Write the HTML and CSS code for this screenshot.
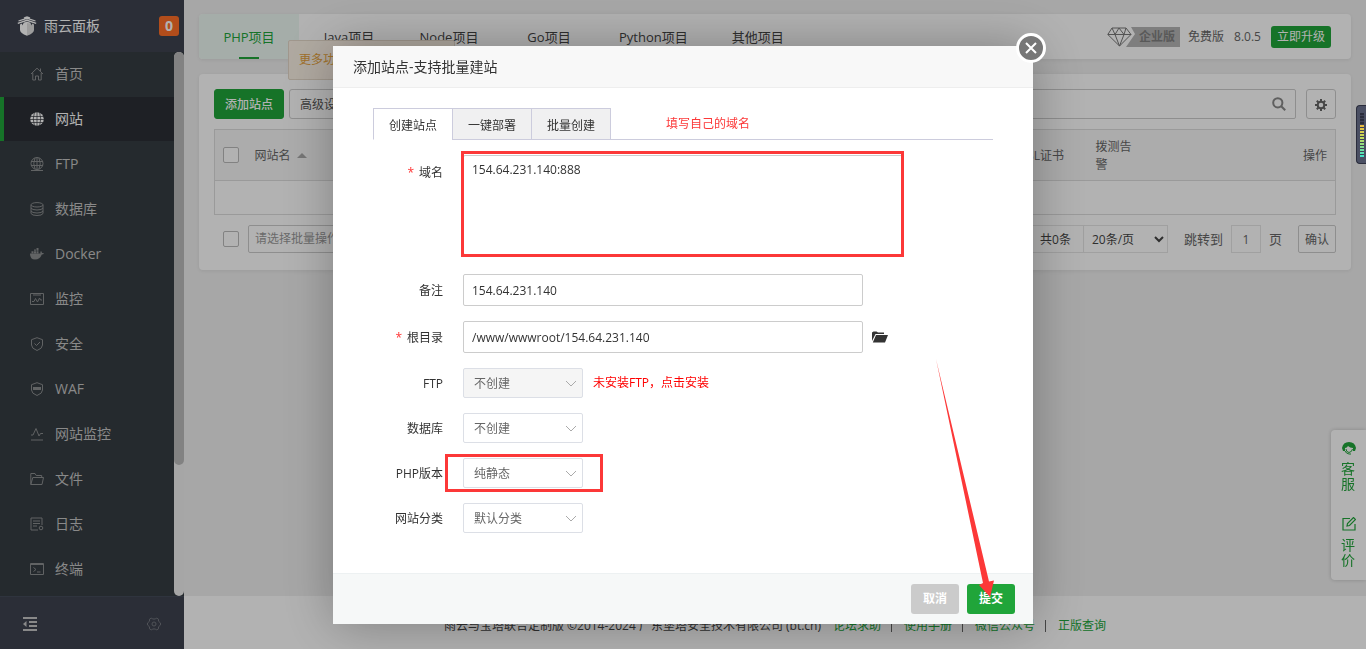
FILE: index.html
```html
<!DOCTYPE html>
<html lang="zh-CN">
<head>
<meta charset="utf-8">
<title>雨云面板</title>
<link rel="stylesheet" href="styles.css">
</head>
<body>
<div class="app">
  <aside class="sidebar">
    <header class="brand">
      <svg class="brand-logo" viewBox="0 0 20 20"><path d="M10 .8l3 1.400M10 .8L7 2.200M1.500 5L10 2.300 18.500 5M.8 7.300L10 4.300l9.200 3" fill="none" stroke="currentColor" stroke-width="1.300"/><path d="M3 8.500l2-1v2l2-3 3-.7 3 .7 2 3v-2l2 1V14q0 3-7 5.800Q3 17 3 14z" fill="currentColor"/><path d="M10 7v12.800Q17 17 17 14V8.500z" fill="#000" opacity=".12"/></svg>
      <span class="brand-name">雨云面板</span>
      <span class="brand-count">0</span>
    </header>
    <div class="menu-wrap">
      <nav class="menu">
        <a class="menu-item" href="#"><svg class="menu-icon" viewBox="0 0 14 14"><path d="M1 7l6-5.800L13 7M2.800 6v7h2.700V9h3v4h2.700V6M10.500 4V1.500"/></svg>首页</a>
        <a class="menu-item menu-item-active" href="#"><svg class="menu-icon" viewBox="0 0 14 14"><circle cx="7" cy="7" r="6.800" fill="currentColor" stroke="none"/><path class="globe-cut" d="M.5 4.500h13M0 7.500h14M.5 10.500h13M7 0v14M4.500 0q-2.500 7 0 14M9.500 0q2.500 7 0 14"/></svg>网站</a>
        <a class="menu-item" href="#"><svg class="menu-icon" viewBox="0 0 14 14"><circle cx="7" cy="6.500" r="6"/><path d="M1 4.500h12M1 8.500h12M7 .5v12M5 1q-2.500 5.500 0 11M9 1q2.500 5.500 0 11M1 13.500h12"/></svg>FTP</a>
        <a class="menu-item" href="#"><svg class="menu-icon" viewBox="0 0 14 14"><ellipse cx="7" cy="2.800" rx="6" ry="2.200"/><path d="M1 3v8.500q1 2 6 2t6-2V3M1 6q1 2 6 2t6-2M1 9q1 2 6 2t6-2"/></svg>数据库</a>
        <a class="menu-item" href="#"><svg class="menu-icon" viewBox="0 0 14 14"><path d="M0 6.500h10.500q-.5-1.500.5-2.500 1 .8 1 2 1-.3 2 .2-.5 1.300-2.200 1.300Q10 12.500 5 12.500 0 12.500 0 6.500zM1.500 4.200h2v2h-2zM4 4.200h2v2H4zM6.500 4.200h2v2h-2zM6.500 1h2v2.800h-2zM4 2.500h2v1.300H4z" fill="currentColor" stroke="none"/></svg>Docker</a>
        <a class="menu-item" href="#"><svg class="menu-icon" viewBox="0 0 14 14"><path d="M.5 1.500h13v11H.5zM3 3h8M2 9.500h2l1.500-3 2 3.500 2-4 1 2H12"/></svg>监控</a>
        <a class="menu-item" href="#"><svg class="menu-icon" viewBox="0 0 14 14"><path d="M7 .7l5.500 2V8q0 3.500-5.500 5.500Q1.500 11.500 1.500 8V2.700zM4.500 6.500L6.500 8.500l3.500-3.500"/></svg>安全</a>
        <a class="menu-item" href="#"><svg class="menu-icon" viewBox="0 0 14 14"><path d="M7 .7l5.500 2V8q0 3.500-5.500 5.500Q1.500 11.500 1.500 8V2.700z"/><path d="M3 5h8v3H3z" fill="currentColor" stroke="none"/></svg>WAF</a>
        <a class="menu-item" href="#"><svg class="menu-icon" viewBox="0 0 14 14"><path d="M1 8h2l3-6.500 3 7.500L10.500 6.500H13M1 13h12"/></svg>网站监控</a>
        <a class="menu-item" href="#"><svg class="menu-icon" viewBox="0 0 14 14"><path d="M.8 12.500V1.500H5l1.200 2h5.500v2M.8 12.500L2.800 5.500h10.700l-1.500 7z"/></svg>文件</a>
        <a class="menu-item" href="#"><svg class="menu-icon" viewBox="0 0 14 14"><path d="M12 8V1H1v12h7M3 4h7M3 6.500h7M3 9h4"/><circle cx="11" cy="11" r="1.800"/></svg>日志</a>
        <a class="menu-item" href="#"><svg class="menu-icon" viewBox="0 0 14 14"><path d="M.5 1.500h13v11H.5zM.5 2.500h13M3.500 5.500l2.500 2-2.500 2M7 10h3.500"/></svg>终端</a>
      </nav>
      <div class="menu-track"><div class="menu-thumb"></div></div>
    </div>
    <footer class="side-foot">
      <svg class="fold-icon" viewBox="0 0 14 14"><path d="M0 1h14M6 5h8M6 9h8M0 13h14"/><path d="M3.500 4v6L0 7z" fill="currentColor" stroke="none"/></svg>
      <svg class="set-icon" viewBox="0 0 14 14"><path d="M4.500 1L5.500 2h3l1-1 2 1.200v2L13.500 6v2l-2 1.800v2l-2 1.200-1-1h-3l-1 1-2-1.200v-2L.5 8V6l2-1.800v-2z"/><circle cx="7" cy="7" r="2"/></svg>
    </footer>
  </aside>

  <div class="page">
    <main class="content">
      <section class="card project-bar">
        <nav class="project-tabs">
          <a class="project-tab project-tab-active" href="#">PHP项目</a>
          <a class="project-tab" href="#">Java项目</a>
          <a class="project-tab" href="#">Node项目</a>
          <a class="project-tab" href="#">Go项目</a>
          <a class="project-tab" href="#">Python项目</a>
          <a class="project-tab" href="#">其他项目</a>
        </nav>
        <div class="version">
          <span class="edition"><svg class="gem" viewBox="0 0 28 20"><path class="gem-back" d="M24 0l4 7-9 13h9V0z"/><path d="M5 1h14l5 6.500L12.500 19 .8 7.500zM.8 7.500h23.200M5 1l3 6.500 4.500 11.500L17 7.500 19 1M8 7.500L12 1l5 6.500"/></svg><b class="edition-name">企业版</b></span>
          <span>免费版</span>
          <span>8.0.5</span>
          <button class="btn-upgrade" type="button">立即升级</button>
        </div>
        <div class="tip">更多功能</div>
      </section>

      <section class="card site-card">
        <div class="toolbar">
          <button class="btn btn-green" type="button">添加站点</button>
          <button class="btn" type="button">高级设置</button>
          <label class="search"><input class="search-input" type="text" aria-label="搜索"><svg class="search-icon" viewBox="0 0 14 14"><circle cx="5.800" cy="5.800" r="4.600"/><path d="M9.200 9.200l4 4"/></svg></label>
          <button class="btn btn-gear" type="button" aria-label="设置"><svg class="gear" viewBox="0 0 12 12"><circle cx="6" cy="6" r="3.300"/><path d="M6 0v2.500M6 9.500V12M0 6h2.500M9.500 6H12M1.800 1.800l1.700 1.700M8.500 8.500l1.700 1.700M1.800 10.200l1.700-1.700M8.500 3.500l1.700-1.700"/></svg></button>
        </div>
        <table class="sites">
          <colgroup><col class="col-check"><col><col class="col-ssl"><col class="col-alarm"><col class="col-act"></colgroup>
          <thead>
            <tr><th class="cell-check"><input class="check" type="checkbox" aria-label="全选"></th><th>网站名<i class="sort"></i></th><th>SSL证书</th><th>拨测告警</th><th class="cell-act">操作</th></tr>
          </thead>
          <tbody><tr><td colspan="5"></td></tr></tbody>
        </table>
        <div class="pager">
          <input class="check check-pager" type="checkbox" aria-label="批量选择">
          <select class="batch" aria-label="批量操作"><option>请选择批量操作</option></select>
          <span class="total">共0条</span>
          <select class="page-size" aria-label="每页条数"><option>20条/页</option></select>
          <label class="jump">跳转到<input class="jump-input" type="text" value="1">页</label>
          <button class="btn-confirm" type="button">确认</button>
        </div>
      </section>
    </main>
    <footer class="page-foot">
      <span>雨云与宝塔联合定制版 ©2014-2024 广东堡塔安全技术有限公司 (bt.cn)</span>
      <a href="#">论坛求助</a><i class="bar"></i><a href="#">使用手册</a><i class="bar"></i><a href="#">微信公众号</a><i class="bar"></i><a href="#">正版查询</a>
    </footer>
  </div>
</div>

<aside class="service">
  <a class="service-item" href="#"><svg class="service-icon" viewBox="0 0 14 14"><path d="M0 7Q1 1 7 1t7 6l-1 3h-2V7Q8 7 6 5 5 7 3 7v3H1z" fill="currentColor"/><path d="M3 10q1 2.500 4 3h2M4 8q0 3 3 3.500Q10 11 10.500 8" fill="none" stroke="currentColor"/></svg><span>客服</span></a>
  <a class="service-item" href="#"><svg class="service-icon" viewBox="0 0 14 14"><path d="M8 1.500H1v11.500h12V7M5 9l.5-2.500 6-6L13.500 2.500l-6 6z" fill="none" stroke="currentColor" stroke-width="1.200"/></svg><span>评价</span></a>
</aside>

<div class="mask">
  <form class="dialog" role="dialog" aria-labelledby="dialog-title">
    <h2 class="dialog-title" id="dialog-title">添加站点-支持批量建站</h2>
    <button class="dialog-close" type="button" aria-label="关闭"><svg viewBox="0 0 12 12"><path d="M1 1l10 10M11 1L1 11"/></svg></button>
    <div class="dialog-body">
      <div class="tabs">
        <button class="tab tab-active" type="button">创建站点</button>
        <button class="tab" type="button">一键部署</button>
        <button class="tab" type="button">批量创建</button>
        <span class="note">填写自己的域名</span>
      </div>
      <div class="row row-domain">
        <label class="label" for="domain"><i class="star">*</i>域名</label>
        <div class="field field-domain"><textarea class="text area" id="domain">154.64.231.140:888</textarea></div>
      </div>
      <div class="row">
        <label class="label" for="remark">备注</label>
        <div class="field"><input class="text" id="remark" type="text" value="154.64.231.140"></div>
      </div>
      <div class="row">
        <label class="label" for="root"><i class="star">*</i>根目录</label>
        <div class="field"><input class="text" id="root" type="text" value="/www/wwwroot/154.64.231.140"><svg class="folder" viewBox="0 0 16 12"><path d="M0 10V1.500L1.500.5h3L6 1.500h6V3H3.500zM4 4h12l-3 7.500H.8z" fill="currentColor"/></svg></div>
      </div>
      <div class="row">
        <label class="label" for="ftp">FTP</label>
        <div class="field"><span class="pick"><select class="select" id="ftp" disabled><option>不创建</option></select><svg class="chev" viewBox="0 0 12 7"><path d="M1 1l5 5 5-5"/></svg></span><a class="install" href="#">未安装FTP，点击安装</a></div>
      </div>
      <div class="row">
        <label class="label" for="db">数据库</label>
        <div class="field"><span class="pick"><select class="select" id="db"><option>不创建</option></select><svg class="chev" viewBox="0 0 12 7"><path d="M1 1l5 5 5-5"/></svg></span></div>
      </div>
      <div class="row">
        <label class="label" for="php">PHP版本</label>
        <div class="field"><span class="pick pick-marked"><select class="select" id="php"><option>纯静态</option></select><svg class="chev" viewBox="0 0 12 7"><path d="M1 1l5 5 5-5"/></svg></span></div>
      </div>
      <div class="row">
        <label class="label" for="type">网站分类</label>
        <div class="field"><span class="pick"><select class="select" id="type"><option>默认分类</option></select><svg class="chev" viewBox="0 0 12 7"><path d="M1 1l5 5 5-5"/></svg></span></div>
      </div>
    </div>
    <footer class="dialog-foot">
      <button class="act act-cancel" type="button">取消</button>
      <button class="act act-submit" type="button">提交<svg class="arrow" viewBox="0 0 60 240"><path d="M1 1L54 223.500 59 222.500 55 239 44 227 48 225z" fill="#fc3838"/></svg></button>
    </footer>
  </form>
</div>

<div class="meter"><div class="meter-scale"></div></div>
</body>
</html>
```

FILE: styles.css
```css
* { box-sizing: border-box; }
body {
  margin: 0;
  font: 12px/18px "Open Sans", "Noto Sans CJK SC", sans-serif;
  color: #666;
  background: #f0f0f0;
}
a { text-decoration: none; color: inherit; }
i { font-style: normal; }
button, input, select, textarea { font: inherit; color: inherit; margin: 0; }
svg { display: block; flex: none; }

.app { display: flex; height: 100vh; overflow: hidden; }

/* sidebar */
.sidebar { width: 184px; flex: none; display: flex; flex-direction: column; background: #363d42; color: #c4c4c4; }
.brand { height: 52px; flex: none; display: flex; align-items: center; padding: 0 5px 0 17px; background: #3e4350; color: #fff; font-size: 14px; }
.brand-logo { width: 20px; height: 20px; margin-right: 7px; }
.brand-count { margin-left: auto; width: 20px; height: 20px; border-radius: 3px; background: #ff6f27; font-weight: bold; line-height: 20px; text-align: center; }
.menu-wrap { flex: 1; min-height: 0; display: flex; }
.menu { flex: 1; overflow: hidden; }
.menu-item { display: flex; align-items: center; height: 44px; margin-bottom: 1px; padding-left: 30px; font-size: 14px; }
.menu-item-active { background: #2c2f36; color: #fff; border-left: 4px solid #20a53a; padding-left: 26px; }
.menu-icon { width: 14px; height: 14px; margin-right: 11px; fill: none; stroke: currentColor; opacity: .6; }
.menu-item-active .menu-icon { opacity: 1; }
.menu-icon .globe-cut { stroke: #2c2f36; stroke-width: .7; }
.menu-track { width: 10px; background: #eee; border-radius: 5px; }
.menu-thumb { height: 76%; border-radius: 5px; background: #bbb; }
.side-foot { height: 53px; flex: none; display: flex; align-items: center; justify-content: space-between; padding: 2px 23px 0; background: #3e4350; border-top: 1px solid #444b5a; }
.fold-icon, .set-icon { width: 14px; height: 14px; fill: none; stroke: currentColor; }
.fold-icon { stroke-width: 2; }
.set-icon { opacity: .4; }

/* page */
.page { flex: 1; min-width: 0; display: flex; flex-direction: column; }
.content { flex: 1; padding: 14px 15px; display: flex; flex-direction: column; gap: 15px; }
.card { background: #fff; border-radius: 4px; box-shadow: 0 1px 4px rgba(0, 0, 0, .08); }
.project-bar { position: relative; display: flex; justify-content: space-between; height: 45px; padding-right: 20px; }
.project-tabs { display: flex; font-size: 13px; color: #444; }
.project-tab { position: relative; min-width: 100px; padding: 1px 20px 0; line-height: 44px; text-align: center; }
.project-tab-active { color: #20a53a; background: #edf8f2; border-radius: 4px 0 0 4px; }
.project-tab-active::after { content: ""; position: absolute; left: 40px; right: 40px; bottom: 0; height: 2px; background: #20a53a; }
.version { display: flex; align-items: center; gap: 10px; }
.edition { display: flex; align-items: center; margin-right: -2px; }
.edition-name { height: 20px; line-height: 20px; padding: 0 5px 0 4px; font-weight: bold; background: #b5b5b5; color: #808080; }
.gem { width: 28px; height: 20px; fill: none; stroke: #777; }
.gem .gem-back { fill: #b5b5b5; stroke: none; }
.btn-upgrade { height: 22px; padding: 0 6px; border: 0; border-radius: 3px; background: #20a53a; color: #fff; }
.tip { position: absolute; left: 89px; top: 26px; width: 167px; height: 40px; padding-left: 10px; line-height: 38px; border: 1px solid #e5d9ca; border-radius: 2px; background: #fdf3e7; color: #e6a23c; }

.site-card { padding: 15px 15px 17px; }
.toolbar { display: flex; gap: 5px; margin-bottom: 10px; }
.btn { height: 30px; padding: 1px 10px 0; border: 1px solid #ccc; border-radius: 3px; background: #fff; color: #555; }
.btn-green { border-color: #20a53a; background: #20a53a; color: #fff; font-weight: 500; }
.search { display: flex; align-items: center; width: 320px; height: 30px; margin: 0 5px 0 auto; padding-right: 9px; border: 1px solid #ccc; border-radius: 2px; }
.search-input { flex: 1; min-width: 0; border: 0; background: none; }
.search-icon { width: 14px; height: 14px; fill: none; stroke: #888; stroke-width: 2; }
.btn-gear { width: 30px; padding: 1px 8px 0; color: #666; }
.gear { width: 12px; height: 12px; fill: none; stroke: currentColor; stroke-width: 2; }

.sites { width: 100%; table-layout: fixed; border-collapse: collapse; border: 1px solid #ddd; }
.sites th { height: 51px; padding: 2px 8px 0; background: #f6f6f6; border-bottom: 1px solid #ddd; font-weight: normal; text-align: left; }
.sites td { height: 34px; }
.sites .cell-check { padding: 0 0 0 8px; }
.sites .cell-act { text-align: right; }
.col-check { width: 32px; }
.col-ssl { width: 75px; }
.col-alarm { width: 56px; }
.col-act { width: 192px; }
.sort { display: inline-block; margin: 0 0 2px 6px; border: 5px solid transparent; border-top: 0; border-bottom-color: #aaa; }
.check { display: block; appearance: none; width: 16px; height: 16px; border: 1px solid #bbb; border-radius: 2px; background: #fff; }

.pager { display: flex; align-items: center; margin-top: 10px; height: 28px; }
.check-pager { margin: 0 9px; }
.batch { appearance: none; width: 130px; height: 28px; padding: 0 6px; border: 1px solid #ccc; border-radius: 2px; background: #fff; color: #999; }
.total { height: 28px; margin-left: auto; padding: 0 12px; line-height: 27px; border: 1px solid #e5e5e5; border-right: 0; color: #444; }
.page-size { width: 85px; height: 28px; padding: 0 0 0 4px; border: 1px solid #e5e5e5; background: #fff; color: #444; }
.jump { display: flex; align-items: center; gap: 8px; margin: 0 16px; font-size: 13px; }
.jump-input { width: 30px; height: 28px; padding: 0; border: 1px solid #e5e5e5; text-align: center; font-size: 12px; }
.btn-confirm { height: 28px; padding: 1px 6px 0; border: 1px solid #ccc; border-radius: 2px; background: #fff; }

.page-foot { height: 53px; flex: none; display: flex; align-items: center; justify-content: center; padding-top: 6px; background: #fff; color: #444; }
.page-foot a { margin-left: 12px; color: #20a53a; }
.bar { width: 1px; height: 12px; margin-left: 10px; background: #666; }

.service { position: fixed; right: 0; bottom: 69px; width: 35px; height: 150px; padding: 11px 10px 13px; display: flex; flex-direction: column; justify-content: space-between; border-radius: 4px 0 0 4px; background: #fff; box-shadow: 0 0 4px rgba(0, 0, 0, .2); color: #20a53a; }
.service-item { display: flex; flex-direction: column; align-items: center; gap: 6px; font-size: 14px; line-height: 15px; }
.service-icon { width: 14px; height: 14px; }

/* dialog */
.mask { position: fixed; inset: 0; display: flex; justify-content: center; align-items: flex-start; padding-top: 46px; background: rgba(0, 0, 0, .3); }
.dialog { position: relative; width: 700px; background: #fff; box-shadow: 1px 1px 50px rgba(0, 0, 0, .3); color: #333; }
.dialog-title { margin: 0; height: 42px; padding: 0 20px; line-height: 42px; font-size: 14px; font-weight: normal; background: #f8f8f8; border-bottom: 1px solid #eee; }
.dialog-close { position: absolute; top: -13px; right: -13px; width: 30px; height: 30px; padding: 6px; border: 3px solid #fff; border-radius: 50%; background: #777; }
.dialog-close svg { width: 12px; height: 12px; fill: none; stroke: #fff; stroke-width: 2; }
.dialog-body { display: flex; flex-direction: column; gap: 15px; padding: 20px 40px 40px; }
.tabs { display: flex; height: 32px; border-bottom: 1px solid #ccd; }
.tab { width: 80px; height: 32px; margin-right: -1px; padding: 4px 0 0; border: 1px solid #ccd; background: #f0f0f1; }
.tab-active { background: #fff; border-bottom-color: #fff; }
.note { margin-left: 56px; line-height: 32px; color: #fc3838; }
.row { display: flex; align-items: center; }
.row-domain { align-items: flex-start; padding-bottom: 4px; }
.row-domain .label { line-height: 32px; }
.label { width: 70px; margin-right: 20px; padding-top: 2px; text-align: right; white-space: nowrap; }
.star { margin-right: 5px; color: #f33; }
.field { position: relative; display: flex; align-items: center; }
.text { width: 400px; height: 32px; padding: 0 8px; border: 1px solid #ccc; border-radius: 2px; background: #fff; }
.area { display: block; width: 440px; height: 100px; padding: 5px 8px; resize: none; }
.field-domain::after { content: ""; position: absolute; inset: -4px -1px -2px -2px; border: 3px solid #fc3838; pointer-events: none; }
.folder { width: 16px; height: 12px; margin-left: 9px; color: #333; }
.pick { position: relative; display: block; width: 120px; }
.select { appearance: none; display: block; width: 100%; height: 30px; padding: 1px 10px 0; border: 1px solid #dcdfe6; border-radius: 2px; background: #fff; color: #666; opacity: 1; }
.select:disabled { background: #f5f5f5; }
.chev { position: absolute; right: 6px; top: 12px; width: 12px; height: 7px; fill: none; stroke: #aaa; pointer-events: none; }
.pick-marked::after { content: ""; position: absolute; inset: -4px -20px -4px -18px; border: 3px solid #fc3838; pointer-events: none; }
.install { margin-left: 10px; color: #f00; }
.dialog-foot { display: flex; justify-content: flex-end; gap: 8px; padding: 10px 18px; background: #f6f8f8; border-top: 1px solid #edf1f2; }
.act { position: relative; width: 48px; height: 30px; padding: 0; border: 0; border-radius: 3px; color: #fff; font-weight: bold; }
.act-cancel { background: #cbcbcb; }
.act-submit { background: #20a53a; }
.arrow { position: absolute; right: 20px; bottom: 16px; width: 60px; height: 240px; pointer-events: none; }

/* volume meter over the page edge */
.meter { position: fixed; right: 0; top: 105px; width: 10px; height: 59px; padding: 7px 2px 6px 3px; border: 1px solid #2a2d3c; border-right: 0; border-radius: 4px 0 0 4px; background: #4a4f63; }
.meter-scale { height: 100%; background: repeating-linear-gradient(transparent 0 2px, #3f4356 2px 3px), linear-gradient(#2a2d3c 25%, #f0b63c 25%, #c5dc5a 55%, #3fe0c8); }
```
